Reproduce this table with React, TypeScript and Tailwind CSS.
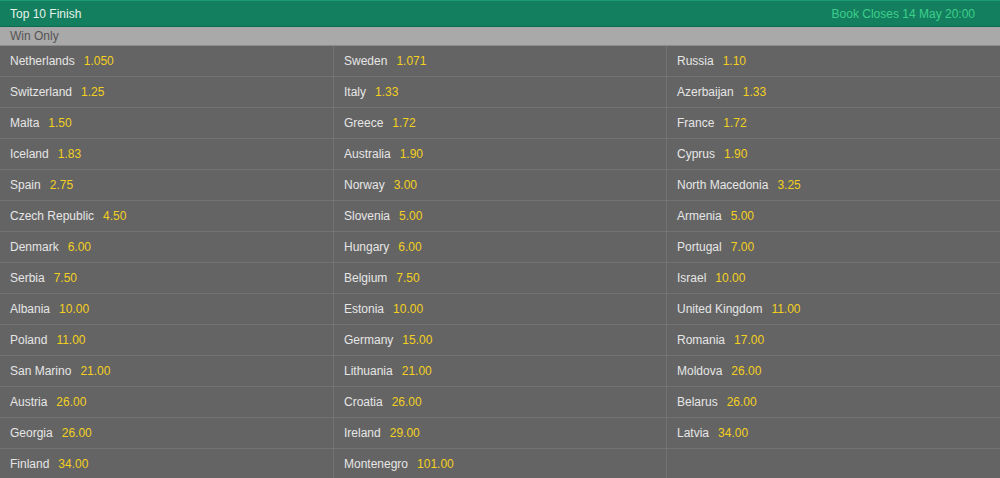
const rows: [string, string][][] = [
  [['Netherlands', '1.050'], ['Sweden', '1.071'], ['Russia', '1.10']],
  [['Switzerland', '1.25'], ['Italy', '1.33'], ['Azerbaijan', '1.33']],
  [['Malta', '1.50'], ['Greece', '1.72'], ['France', '1.72']],
  [['Iceland', '1.83'], ['Australia', '1.90'], ['Cyprus', '1.90']],
  [['Spain', '2.75'], ['Norway', '3.00'], ['North Macedonia', '3.25']],
  [['Czech Republic', '4.50'], ['Slovenia', '5.00'], ['Armenia', '5.00']],
  [['Denmark', '6.00'], ['Hungary', '6.00'], ['Portugal', '7.00']],
  [['Serbia', '7.50'], ['Belgium', '7.50'], ['Israel', '10.00']],
  [['Albania', '10.00'], ['Estonia', '10.00'], ['United Kingdom', '11.00']],
  [['Poland', '11.00'], ['Germany', '15.00'], ['Romania', '17.00']],
  [['San Marino', '21.00'], ['Lithuania', '21.00'], ['Moldova', '26.00']],
  [['Austria', '26.00'], ['Croatia', '26.00'], ['Belarus', '26.00']],
  [['Georgia', '26.00'], ['Ireland', '29.00'], ['Latvia', '34.00']],
  [['Finland', '34.00'], ['Montenegro', '101.00']],
]

export default function App() {
  return (
    <div className="w-[1000px] h-[478px] overflow-hidden bg-[#646464] text-[12px] font-['Liberation_Sans',Arial,sans-serif]">
      {/* market header */}
      <div className="flex items-center justify-between h-[27px] px-[10px] pr-[25px] bg-[#147f5e] border-t border-t-[#1c9a70] border-b border-b-[#0e6a4e]">
        <span className="text-[#e4f2ec]">Top 10 Finish</span>
        <span className="text-[#3ccf8c]">Book Closes 14 May 20:00</span>
      </div>
      <div className="h-[19px] flex items-center px-[10px] bg-[#a9a9a9] text-[#555555] border-b border-b-[#8c8c8c]">
        Win Only
      </div>

      {/* selections */}
      <div className="grid grid-cols-[334px_333px_333px]">
        {rows.map((row, i) =>
          [0, 1, 2].map((c) => {
            const sel = row[c]
            return (
              <div
                key={`${i}-${c}`}
                className={`h-[31px] flex items-center gap-[9px] pl-[10px] border-b border-b-[#737373] ${c < 2 ? 'border-r border-r-[#737373]' : ''}`}
              >
                {sel && (
                  <>
                    <span className="text-[#e6e6e6]">{sel[0]}</span>
                    <span className="text-[#f3d020]">{sel[1]}</span>
                  </>
                )}
              </div>
            )
          })
        )}
      </div>
    </div>
  )
}
